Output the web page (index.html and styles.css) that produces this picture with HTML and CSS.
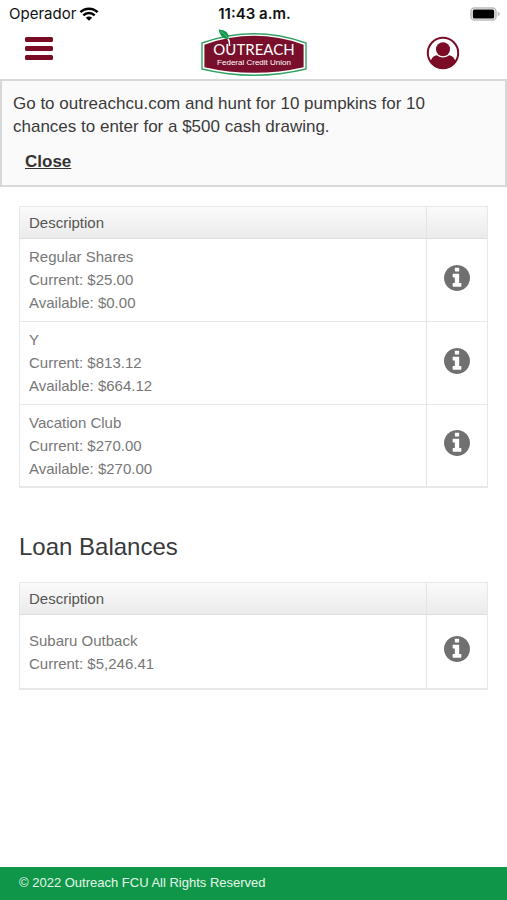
FILE: index.html
```html
<!DOCTYPE html>
<html lang="en">
<head>
<meta charset="utf-8">
<meta name="viewport" content="width=device-width, initial-scale=1">
<title>Outreach Federal Credit Union</title>
<link rel="stylesheet" href="styles.css">
</head>
<body>
<svg class="defs" aria-hidden="true">
  <symbol id="info" viewBox="128 128 1536 1536">
    <path d="M1152 1376v-160q0-14-9-23t-23-9h-96v-512q0-14-9-23t-23-9h-320q-14 0-23 9t-9 23v160q0 14 9 23t23 9h96v320h-96q-14 0-23 9t-9 23v160q0 14 9 23t23 9h448q14 0 23-9t9-23zM1024 480v-160q0-14-9-23t-23-9h-192q-14 0-23 9t-9 23v160q0 14 9 23t23 9h192q14 0 23-9t9-23zM1664 896q0 209-103 385.500t-279.500 279.500t-385.500 103t-385.500-103t-279.500-279.500t-103-385.500t103-385.500t279.500-279.500t385.500-103t385.500 103t279.500 279.500t103 385.500z"/>
  </symbol>
</svg>

<div class="status">
  <div class="carrier">
    <span>Operador</span>
    <svg width="20" height="14" viewBox="0 0 20 14" aria-hidden="true">
      <path d="M1.400 5.200a12.400 12.400 0 0 1 17.200 0M4.300 8.300a8.200 8.200 0 0 1 11.400 0" fill="none" stroke="#000" stroke-width="2.500"/>
      <path d="M10 13.800L6.800 10.700a4.600 4.600 0 0 1 6.400 0z"/>
    </svg>
  </div>
  <time class="clock">11:43 a.m.</time>
  <svg class="battery" width="30" height="14" viewBox="0 0 30 14" aria-hidden="true">
    <rect x="1" y="1" width="25" height="12" rx="3.500" fill="#fff" stroke="#bbb" stroke-width="1.600"/>
    <rect x="2.800" y="2.600" width="21.400" height="8.800" rx="1.500"/>
    <path d="M27.600 4.800q2.200.6 2.200 2.200t-2.200 2.200z" fill="#bbb"/>
  </svg>
</div>

<header class="topbar">
  <button class="icon-button menu" type="button" aria-label="Menu">
    <svg width="28" height="24" viewBox="0 0 28 24">
      <path d="M0 1.500q0-1.500 1.500-1.500h25q1.500 0 1.500 1.500v2q0 1.500-1.500 1.500h-25q-1.500 0-1.500-1.500zM0 10.500q0-1.500 1.500-1.500h25q1.500 0 1.500 1.500v2q0 1.500-1.500 1.500h-25q-1.500 0-1.500-1.500zM0 19.500q0-1.500 1.500-1.500h25q1.500 0 1.500 1.500v2q0 1.500-1.500 1.500h-25q-1.500 0-1.500-1.500z"/>
    </svg>
  </button>
  <a class="logo" href="#">
    <svg width="106" height="48" viewBox="0 0 106 48">
      <path d="M1 14Q53-4.500 105 14V40Q53 52.500 1 40z" fill="#fff" stroke="#35a266" stroke-width="1.400"/>
      <path d="M3.400 15.700Q53-2 102.600 15.700V38.200Q53 49.500 3.400 38.200z" fill="#790f2b"/>
      <text class="logo-name" x="53" y="26" text-anchor="middle">OUTREACH</text>
      <text class="logo-sub" x="53" y="36" text-anchor="middle">Federal Credit Union</text>
      <path d="M27 9.500Q28.800 12 28.600 17" fill="none" stroke="#fff" stroke-width="1.600"/>
      <path d="M17.500.4C24 .8 28.500 3.500 27.500 10C21 10 19 5.500 17.500.4z" fill="#109649"/>
      <path d="M19.500 2.300Q24 4.500 27 9.500" fill="none" stroke="#8ed0a8" stroke-width=".6"/>
    </svg>
  </a>
  <button class="icon-button profile" type="button" aria-label="Profile">
    <svg width="34" height="34" viewBox="0 0 34 34">
      <circle cx="17" cy="17" r="15.200" fill="none" stroke="#7a0c26" stroke-width="2"/>
      <circle cx="17" cy="13.300" r="7"/>
      <path d="M4.500 26q1-5.500 6.200-6.700q6.300 4.600 12.600 0q5.200 1.200 6.200 6.700q-4.500 6.500-12.500 6.500t-12.500-6.500z"/>
    </svg>
  </button>
</header>

<section class="notice">
  <p>Go to outreachcu.com and hunt for 10 pumpkins for 10 chances to enter for a $500 cash drawing.</p>
  <a class="close" href="#">Close</a>
</section>

<main>
  <table>
    <thead><tr><th>Description</th><th class="action" aria-label="Details"></th></tr></thead>
    <tbody>
      <tr><td>Regular Shares<br>Current: $25.00<br>Available: $0.00</td><td class="action"><button type="button" aria-label="Regular Shares details"><svg width="26" height="26"><use href="#info"/></svg></button></td></tr>
      <tr><td>Y<br>Current: $813.12<br>Available: $664.12</td><td class="action"><button type="button" aria-label="Y details"><svg width="26" height="26"><use href="#info"/></svg></button></td></tr>
      <tr><td>Vacation Club<br>Current: $270.00<br>Available: $270.00</td><td class="action"><button type="button" aria-label="Vacation Club details"><svg width="26" height="26"><use href="#info"/></svg></button></td></tr>
    </tbody>
  </table>

  <h2>Loan Balances</h2>
  <table class="loans">
    <thead><tr><th>Description</th><th class="action" aria-label="Details"></th></tr></thead>
    <tbody>
      <tr><td>Subaru Outback<br>Current: $5,246.41</td><td class="action"><button type="button" aria-label="Subaru Outback details"><svg width="26" height="26"><use href="#info"/></svg></button></td></tr>
    </tbody>
  </table>
</main>

<footer>© 2022 Outreach FCU All Rights Reserved</footer>
</body>
</html>
```
FILE: styles.css
```css
* { box-sizing: border-box; }

body {
  margin: 0;
  min-height: 100vh;
  display: flex;
  flex-direction: column;
  background: #fff;
  color: #3a3a3a;
  font-family: "Liberation Sans", Arial, sans-serif;
  font-size: 17px;
  line-height: 23px;
}

button {
  padding: 0;
  border: 0;
  background: none;
  cursor: pointer;
}

svg { display: block; }

.defs { position: absolute; width: 0; height: 0; }

.status {
  display: grid;
  grid-template-columns: 1fr auto 1fr;
  align-items: center;
  height: 27px;
  padding: 0 7px 0 9px;
  color: #111;
  font-family: Inter, sans-serif;
  font-size: 15px;
}

.carrier { display: flex; align-items: center; gap: 3px; }
.clock { font-weight: 600; }
.battery { justify-self: end; }

.topbar {
  display: grid;
  grid-template-columns: 1fr auto 1fr;
  align-items: center;
  height: 52px;
  padding: 0 25px;
}

.icon-button { fill: #7a0c26; }
.menu { justify-self: start; padding-bottom: 8px; }
.profile { justify-self: end; margin-right: 22px; }

.logo-name { fill: #fff; font-family: Lato, sans-serif; font-size: 15px; }
.logo-sub { fill: #fff; font-family: "Liberation Sans", Arial, sans-serif; font-size: 8px; }

.notice {
  padding: 11px 11px 12px;
  border: 2px solid #d8d8d8;
  background: #fafafa;
}

.notice p { margin: 0 48px 12px 0; }

.close {
  display: inline-block;
  margin-left: 12px;
  color: #333;
  font-weight: 700;
}

main {
  flex: 1;
  padding: 19px 19px 32px;
}

table {
  width: 100%;
  border: 1px solid #e8e8e8;
  border-bottom-width: 2px;
  border-spacing: 0;
  color: #777;
  font-size: 15px;
}

th {
  height: 32px;
  padding: 0 9px;
  border-bottom: 1px solid #ddd;
  background: linear-gradient(#fafafa, #ebebeb);
  color: #555;
  font-weight: 400;
  text-align: left;
}

td { padding: 6px 9px 7px; }
td + td, th + th { border-left: 1px solid #e4e4e4; }
tr + tr td { border-top: 1px solid #e8e8e8; }
tr:last-child td { padding-bottom: 6px; }

td.action { padding: 0 0 4px; text-align: center; }
.action { width: 61px; }
.action button { display: block; margin: 0 auto; fill: #707070; }

.loans td { height: 73px; }

h2 {
  margin: 45px 0 21px;
  font-size: 24px;
  font-weight: 400;
  line-height: 28px;
}

footer {
  padding: 4px 19px 6px;
  background: #109648;
  color: #e4f7eb;
  font-size: 13px;
}
```
